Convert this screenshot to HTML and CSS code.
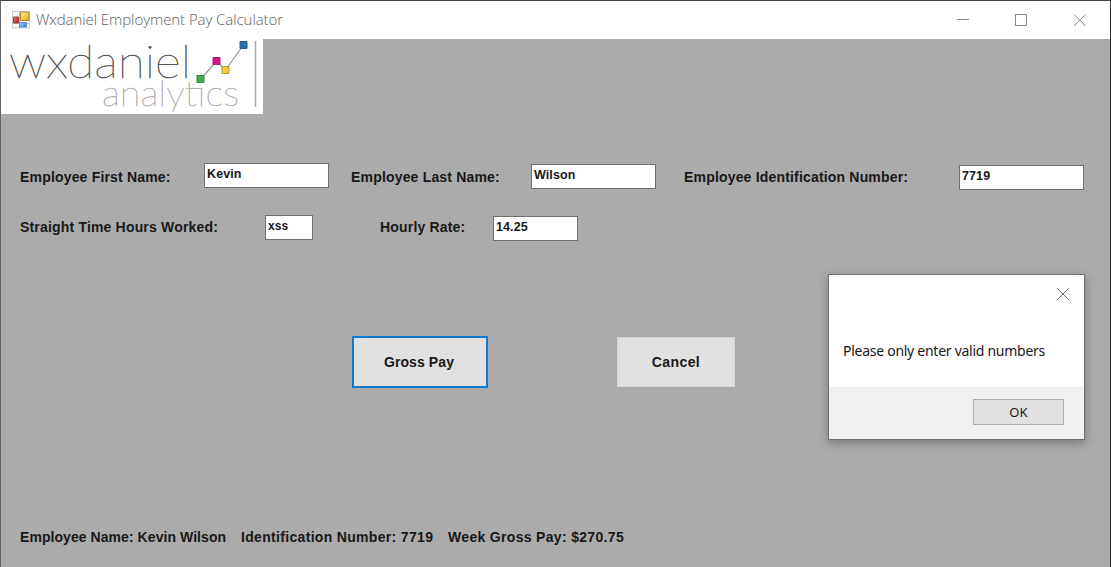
FILE: index.html
```html
<!DOCTYPE html>
<html lang="en">
<head>
<meta charset="utf-8">
<title>Wxdaniel Employment Pay Calculator</title>
<link rel="stylesheet" href="styles.css">
</head>
<body>
<main class="window">
  <header class="titlebar">
    <svg class="app-icon" width="18" height="18" viewBox="0 0 18 18">
      <defs>
        <linearGradient id="gold" x2="1" y2="1"><stop stop-color="#fff0a0"/><stop offset="1" stop-color="#e6ab08"/></linearGradient>
        <linearGradient id="blue" x2="1" y2="1"><stop stop-color="#a9cdfb"/><stop offset="1" stop-color="#3478dc"/></linearGradient>
        <linearGradient id="red" x2="1" y2="1"><stop stop-color="#f08070"/><stop offset="1" stop-color="#ae1c10"/></linearGradient>
      </defs>
      <path d="M.5 .5h17v16.500h-17z" fill="#f3f5f8" stroke="#c8ccd4"/>
      <path d="M7.500 1v16M1 12.500h16" stroke="#b7bcc8"/>
      <path d="M8.500 1h8.500v8.500h-8.500z" fill="url(#gold)" stroke="#b08a2c"/>
      <path d="M1.500 6h5v6h-5z" fill="url(#red)" stroke="#a03c34"/>
      <path d="M7.500 11.500h7v4.500h-7z" fill="url(#blue)" stroke="#608cd0"/>
    </svg>
    <span class="title">Wxdaniel Employment Pay Calculator</span>
    <svg class="controls" width="130" height="14" viewBox="0 0 130 14" fill="none" stroke="#868686">
      <path d="M1 6.500h12M59.500 1.500h11v11h-11z"/><path d="M118 1.500l11.500 11.500M129.500 1.500l-11.500 11.500"/>
    </svg>
  </header>
  <svg class="logo" width="262" height="75" viewBox="0 0 262 75">
    <g class="wordmark">
      <text class="brand" x="8" y="39" textLength="182" lengthAdjust="spacingAndGlyphs">wxdaniel</text>
      <text class="brand-sub" x="101" y="67" textLength="137" lengthAdjust="spacingAndGlyphs">analytics</text>
    </g>
    <path d="M200 40L215.500 22L224.500 31L242.500 6" fill="none" stroke="#999" stroke-width="1.200"/>
    <path d="M254.500 2v66" stroke="#aaa" stroke-width="1.500"/>
    <g stroke-width="1"><path d="M196 36.500h7v7h-7z" fill="#40ac4c" stroke="#378843"/><path d="M212 18.500h7v7h-7z" fill="#d31583" stroke="#9e2369"/><path d="M221 27.500h7v7h-7z" fill="#f5ce35" stroke="#a99442"/><path d="M239 2.500h7v7h-7z" fill="#216fae" stroke="#33587b"/></g>
  </svg>
  <section class="row names">
    <label>Employee First Name:</label><div class="field">Kevin</div>
    <label>Employee Last Name:</label><div class="field low">Wilson</div>
    <label>Employee Identification Number:</label><div class="field lower">7719</div>
  </section>
  <section class="row pay">
    <label>Straight Time Hours Worked:</label><div class="field hours">xss</div>
    <label>Hourly Rate:</label><div class="field low">14.25</div>
  </section>
  <section class="actions">
    <button class="primary">Gross Pay</button>
    <button class="cancel">Cancel</button>
  </section>
  <footer class="summary"><span>Employee Name: Kevin Wilson</span><span>Identification Number: 7719</span><span>Week Gross Pay: $270.75</span></footer>
  <section class="dialog" role="dialog">
    <div class="dialog-top">
      <svg class="close" width="14" height="14" viewBox="0 0 14 14"><path d="M1 1l12 12M13 1L1 13" stroke="#777"/></svg>
      <p class="message">Please only enter valid numbers</p>
    </div>
    <div class="dialog-bottom"><button class="ok">OK</button></div>
  </section>
</main>
</body>
</html>
```
FILE: styles.css
```css
* { box-sizing: border-box; }
body { margin: 0; }
.window {
  position: relative;
  display: flex;
  flex-direction: column;
  width: 1111px;
  height: 567px;
  overflow: hidden;
  border: 1px solid #666;
  border-top-color: #444;
  border-right-color: #303030;
  border-bottom: 0;
  background: #ababab;
  color: #181818;
  font: bold 14px/20px "Liberation Sans", sans-serif;
}
.titlebar { display: flex; align-items: center; flex: none; height: 38px; padding: 0 24px 0 11px; background: #fff; }
.title { margin: -2px 0 0 6px; color: #606060; font: 300 15px/20px "Open Sans", sans-serif; letter-spacing: -0.07px; white-space: nowrap; }
.controls { margin-left: auto; }
.logo { flex: none; background: #fff; }
.wordmark { opacity: 0.99; }
.brand { font: 100 46px Lato, sans-serif; fill: #555; stroke: #555; stroke-width: 0.5px; }
.brand-sub { font: 100 35px Lato, sans-serif; fill: #aaa; stroke: #aaa; stroke-width: 0.4px; }
.row { display: grid; align-items: start; flex: none; white-space: nowrap; }
.row label { padding-top: 4px; letter-spacing: 0.18px; }
.names { margin-top: 49px; padding-left: 19px; grid-template-columns: 184px 147px 180px 153px 275px 125px; }
.pay { margin-top: 25px; padding-left: 19px; grid-template-columns: 245px 115px 113px 85px; }
.pay label { padding-top: 2px; }
.names .field { width: 125px; }
.field { height: 25px; padding-left: 2px; border: 1px solid #707070; background: #fff; font-size: 12.500px; line-height: 20px; letter-spacing: 0.1px; }
.field.hours { width: 48px; font-size: 12px; }
.field.low { margin-top: 1px; }
.field.lower { margin-top: 2px; }
.actions { display: flex; align-items: center; gap: 129px; margin: 95px 0 0 351px; }
button { padding: 0; border: 0; background: #e1e1e1; color: #181818; font: bold 14px "Liberation Sans", sans-serif; letter-spacing: 0.1px; }
.primary { width: 136px; height: 52px; padding-right: 2px; border: 2px solid #0f78cf; }
.cancel { width: 118px; height: 50px; border: 1px solid #d4d4d4; letter-spacing: 0.4px; }
.summary { display: grid; grid-template-columns: 221px 207px 200px; margin: 139px 0 0 19px; white-space: nowrap; letter-spacing: 0.32px; }
.summary span:first-child { letter-spacing: 0.06px; }
.dialog { position: absolute; left: 827px; top: 273px; width: 257px; height: 166px; border: 1px solid #6e6e6e; background: #fff; box-shadow: 0 3px 9px rgba(0, 0, 0, 0.3); font: 14px/20px "Noto Sans", sans-serif; letter-spacing: -0.27px; }
.dialog-top { display: flex; flex-direction: column; height: 112px; padding: 12px 14px 0; }
.close { align-self: flex-end; }
.message { margin: 40px 0 0; white-space: nowrap; }
.dialog-bottom { display: flex; justify-content: flex-end; height: 52px; padding: 12px 20px 0 0; background: #f0f0f0; }
.ok { width: 91px; height: 26px; border: 1px solid #adadad; font: 13px "Noto Sans", sans-serif; }
```
